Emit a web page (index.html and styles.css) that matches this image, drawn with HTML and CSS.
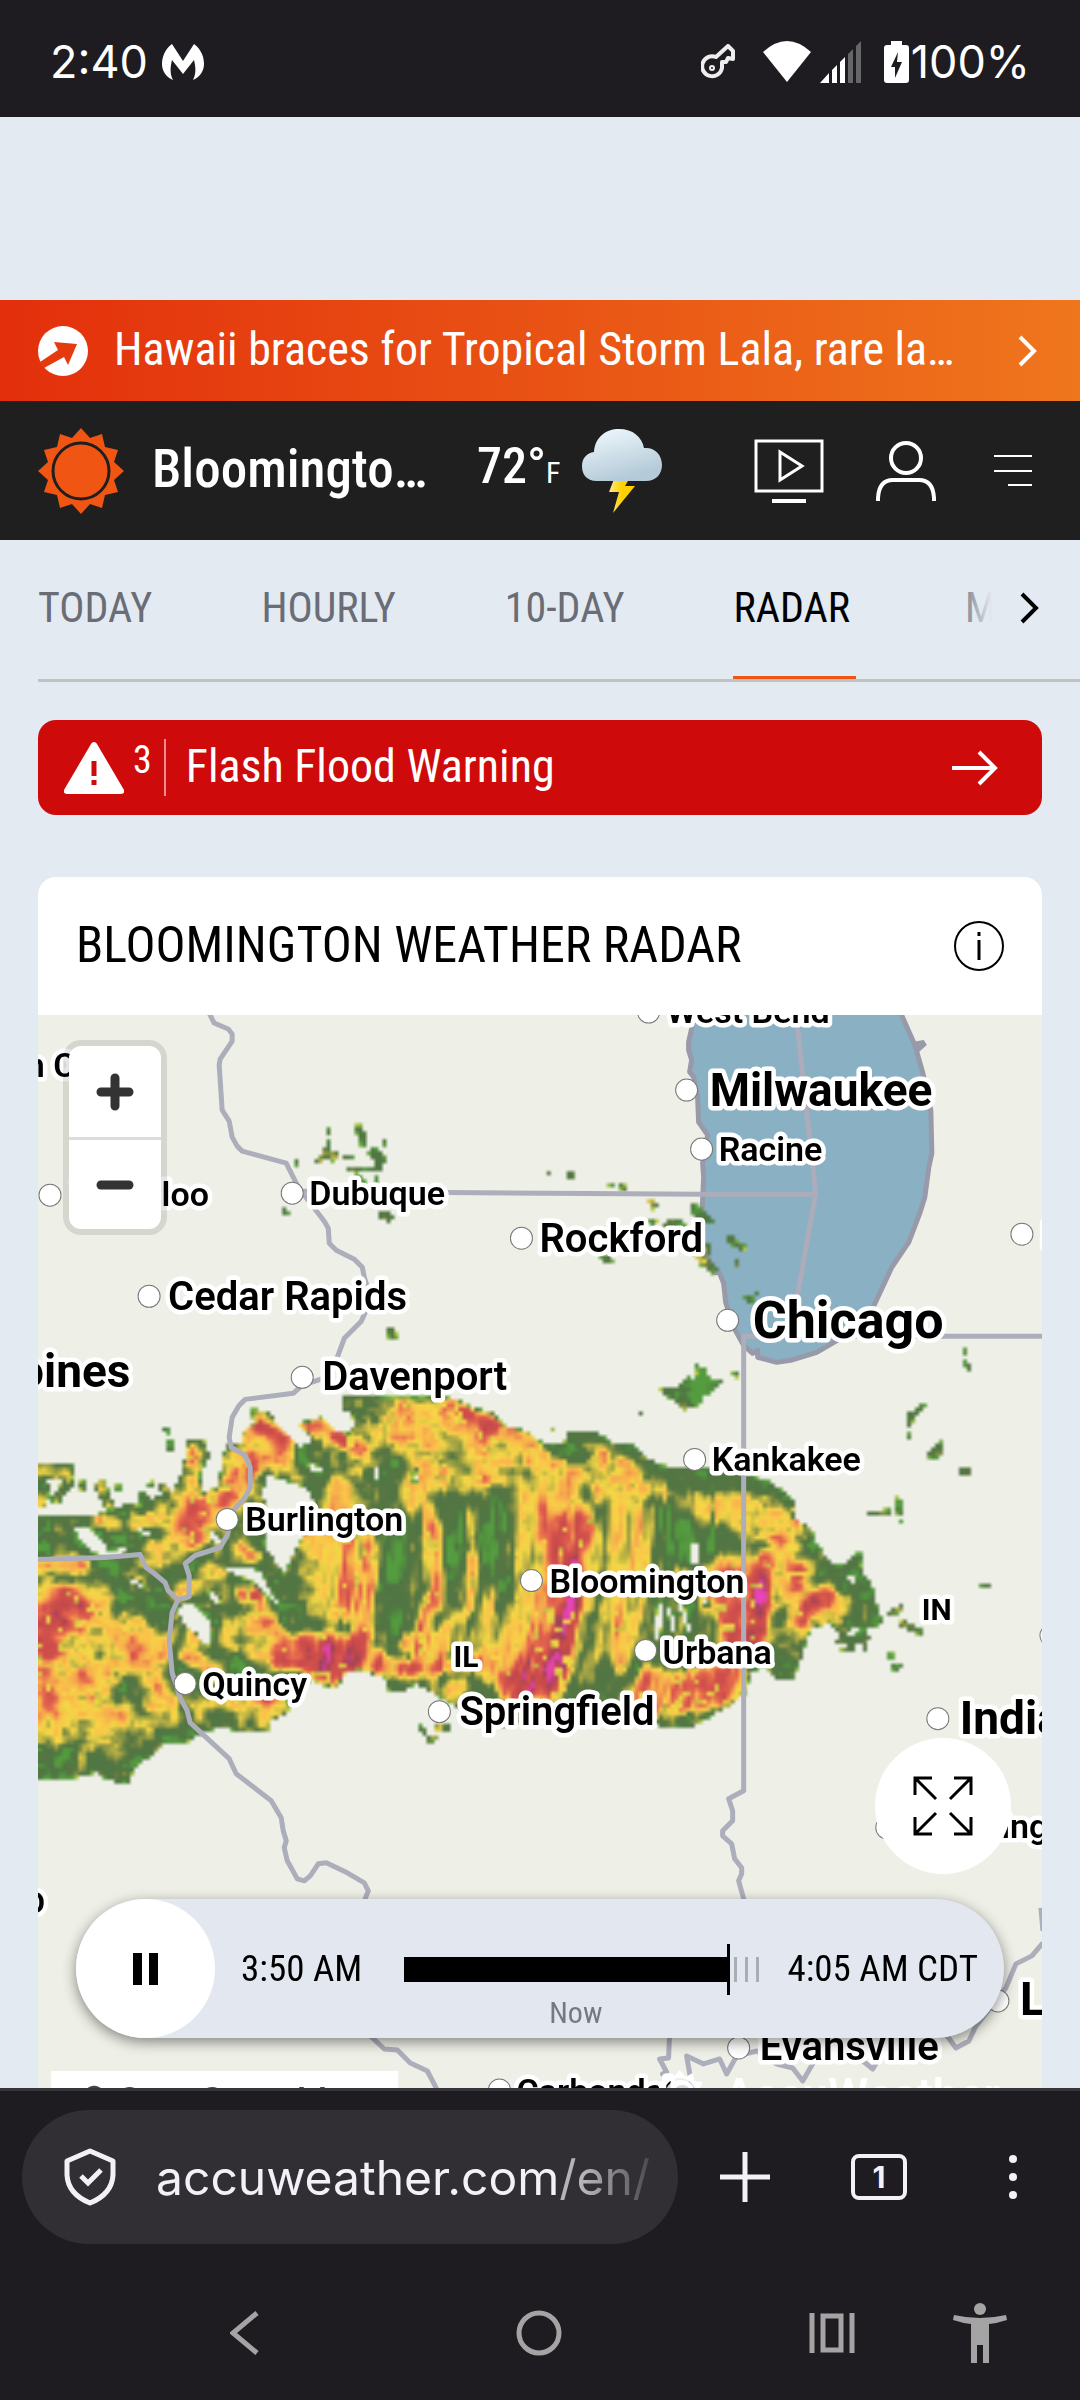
FILE: index.html
```html
<!DOCTYPE html>
<html lang="en">
<head>
<meta charset="utf-8">
<meta name="viewport" content="width=device-width, initial-scale=1">
<title>Bloomington Weather Radar</title>
<link rel="stylesheet" href="styles.css">
</head>
<body>
<header class="status">
  <span class="clock">2:40</span>
  <svg class="m-icon" viewBox="0 0 42 36" width="42" height="36"><path fill="#fff" d="M10 0 21 17 32 0C40 6 42 14 42 20 42 27 38 33 31 36 34 30 34 24 32 16L21 30 10 16C8 24 8 30 11 36 4 33 0 27 0 20 0 13 3 5 10 0Z"/></svg>
  <svg class="key" viewBox="0 0 34 36" width="34" height="36" fill="none" stroke="#eee" stroke-width="4" stroke-linejoin="round"><path d="M15 13 27 2 32 7 32 15 27 14 25 18 21 18 21 24A10 10 0 1 1 15 13Z"/><circle cx="11" cy="24" r="1"/></svg>
  <svg class="wifi" viewBox="0 0 48 41" width="48" height="41"><path fill="#fff" d="M0 11Q24-11 48 11L24 41Z"/></svg>
  <svg class="signal" viewBox="0 0 42 42" width="42" height="42"><path fill="#fff" d="M0 42 9 32V42ZM12 42V29L17 24V42ZM20 42V21L25 16V42Z"/><path fill="#666" d="M28 42V13L33 8V42ZM36 42V5L41 0V42Z"/></svg>
  <svg class="battery" viewBox="0 0 25 42" width="25" height="42"><path fill="#fff" d="M7 0H18V4H22Q25 4 25 7V39Q25 42 22 42H3Q0 42 0 39V7Q0 4 3 4H7Z"/><path fill="#1e1c20" d="M14 11 7 26H11V37L18 21H13Z"/></svg>
  <span class="percent">100%</span>
</header>

<main class="page">
  <div class="ad-space"></div>
  <a class="news" href="#news">
    <svg viewBox="0 0 50 50" width="50" height="50"><circle cx="25" cy="25" r="25" fill="#fff"/><path fill="#e43a0e" d="M16 16 39 18 30 39 26 31 6 42 2 36 20 24Z"/></svg>
    <span class="news-text">Hawaii braces for Tropical Storm Lala, rare la…</span>
    <svg class="chev" viewBox="0 0 20 32" width="20" height="32" fill="none" stroke="#fff" stroke-width="4"><path d="M2 2 16 16 2 30"/></svg>
  </a>

  <div class="top">
    <a href="#home" aria-label="Home"><svg viewBox="-43 -43 86 86" width="86" height="86"><path fill="#f05514" d="M0-43 9-33 21-37 24-24 37-21 33-9 43 0 33 9 37 21 24 24 21 37 9 33 0 43-9 33-21 37-24 24-37 21-33 9-43 0-33-9-37-21-24-24-21-37-9-33Z"/><circle r="28" fill="#f05514" stroke="#1f1f1f" stroke-width="3"/></svg></a>
    <span class="city">Bloomingto…</span>
    <span class="temp">72°<small>F</small></span>
    <svg class="storm" viewBox="0 0 82 84" width="82" height="84"><defs><linearGradient id="cl" x1="0" y1="0" x2="0.4" y2="1"><stop offset="0" stop-color="#f2fbff"/><stop offset="1" stop-color="#b4cad8"/></linearGradient><linearGradient id="bt"><stop offset="0" stop-color="#ffe98a"/><stop offset=".5" stop-color="#ffd000"/></linearGradient></defs><path fill="url(#bt)" d="M33 50H48L44 57H54L32 84 38 63H28Z"/><path fill="url(#cl)" d="M16 52C5 52 1 45 1 37 1 29 6 24 13 23 14 8 25 0 38 0 52 0 61 8 63 19 74 18 81 26 81 36 81 45 75 52 65 52Z"/></svg>
    <button class="icon-btn tv" aria-label="Watch"><svg viewBox="0 0 70 64" width="70" height="64" fill="none" stroke="#fff" stroke-width="3"><path d="M2 2H68V52H2ZM26 13 48 27 26 41Z"/><path stroke-width="4" d="M18 62H52"/></svg></button>
    <button class="icon-btn user" aria-label="Account"><svg viewBox="0 0 60 60" width="60" height="60" fill="none" stroke="#fff" stroke-width="4"><circle cx="30" cy="17" r="15"/><path d="M2 60V57Q3 39 17 39H43Q57 39 58 57V60"/></svg></button>
    <button class="icon-btn menu" aria-label="Menu"><svg viewBox="0 0 38 34" width="38" height="34" fill="none" stroke="#fff" stroke-width="2"><path d="M0 2H38M0 17H38M14 31H38"/></svg></button>
  </div>

  <nav class="tabs">
    <a href="#today">TODAY</a>
    <a href="#hourly">HOURLY</a>
    <a href="#ten">10-DAY</a>
    <a class="on" href="#radar">RADAR</a>
    <a href="#minutecast">MINUTECAST</a>
    <button class="more" aria-label="More tabs"><svg viewBox="0 0 20 32" width="20" height="32" fill="none" stroke="#000" stroke-width="4"><path d="M2 2 16 16 2 30"/></svg></button>
  </nav>

  <a class="alert" href="#alerts">
    <svg viewBox="0 0 60 52" width="60" height="52"><path fill="#fff" d="M30 0Q32 0 33 2L60 48Q61 52 57 52H3Q-1 52 0 48L27 2Q28 0 30 0Z"/><path stroke="#cf0a0a" stroke-width="5" d="M30 19V34M30 38V43"/></svg>
    <span class="count">3</span>
    <span class="alert-text">Flash Flood Warning</span>
    <svg viewBox="0 0 46 36" width="46" height="36" fill="none" stroke="#fff" stroke-width="4"><path d="M0 18H43M27 2 43 18 27 34"/></svg>
  </a>

  <section class="card">
    <div class="card-head">
      <h1>BLOOMINGTON WEATHER RADAR</h1>
      <button class="icon-btn" aria-label="Legend"><svg viewBox="0 0 50 50" width="50" height="50"><circle cx="25" cy="25" r="24" fill="none" stroke="#000" stroke-width="2"/><path stroke="#000" stroke-width="3" d="M25 19V39M25 11V15"/></svg></button>
    </div>
    <div class="map">
      <svg class="layer" viewBox="0 0 1004 1072" preserveAspectRatio="xMinYMin slice">
        <path fill="#8ab0c3" stroke="#989aaa" stroke-width="5" stroke-linejoin="round" d="M657-4 650 27V35L653 45 651 57 655 62 659 82 660 107 669 120 664 148 665 162 663 208 664 228 676 257 681 258 685 268 687 287 695 312 705 330 714 338 719 335 719 342 738 347 752 345 778 337 802 323 833 295 853 252 870 227 881 198 886 182 890 152 893 138 892 95 884 58 876 30 861-4Z"/>
        <path fill="#989aaa" d="M873 27 885 25 888 30 879 38Z"/>
        <path fill="none" stroke="#acacba" stroke-width="5" d="M757-4 777 178 757 290M664 179H777"/>
      </svg>
      <canvas class="layer" id="radar" width="251" height="268"></canvas>
      <svg class="layer" viewBox="0 0 1004 1072" preserveAspectRatio="xMinYMin slice">
        <g fill="none" stroke="#adaebb" stroke-width="5" stroke-linejoin="round">
          <path d="M171-2 176 8 190 14 194 19V26L182 44 181 50 184 95 191 106 194 122 199 131 204 136 248 148 260 172 286 206 290 213 291 228 298 235 316 244 324 252 326 262 330 275V290L323 306 306 323 299 342 288 362 264 370 255 378 207 384 201 390 194 402 191 422 193 432 207 440 212 452V472L207 482 195 495 189 520 182 532 157 540 147 548 151 560V581L140 584 134 597 131 625 134 657 142 682 149 695 152 707 191 743 198 758 233 785 243 802 245 815 248 825 246 832 249 845 259 863 266 865 272 860 280 848 288 847 309 857 326 867 330 875 324 890"/>
          <path d="M0 544 67 542 102 539 108 552 115 557 127 567 130 575 140 584M254 176 502 178 664 179M1004 321H705V775L690 783 694 795V805L684 815V820L693 828 696 843 703 852V858L700 865 707 890"/>
          <path d="M332 1020 346 1033 359 1034 372 1047 389 1055 402 1080M631 1018 630 1042 621 1043 628 1056 624 1058 640 1075M654 1074 648 1040 665 1048 681 1043 688 1058 698 1040 718 1035 738 1048 754 1052 764 1065 775 1046M824 1045 834 1053 840 1043M907 1018 917 1032 930 1025 937 1010 967 972 977 948 993 940 1004 927M1004 915 1002 892"/>
        </g>
        <g fill="#fff" stroke="#777" stroke-width="1">
          <circle cx="610" cy="-3" r="11"/><circle cx="12" cy="180" r="11"/><circle cx="254" cy="178" r="11"/><circle cx="111" cy="281" r="11"/><circle cx="264" cy="362" r="11"/><circle cx="483" cy="223" r="11"/><circle cx="648" cy="75" r="11"/><circle cx="663" cy="134" r="11"/><circle cx="689" cy="305" r="11"/><circle cx="983" cy="219" r="11"/><circle cx="656" cy="444" r="11"/><circle cx="493" cy="565" r="11"/><circle cx="607" cy="635" r="11"/><circle cx="401" cy="696" r="11"/><circle cx="189" cy="504" r="11"/><circle cx="147" cy="668" r="11"/><circle cx="899" cy="703" r="11"/><circle cx="1012" cy="620" r="11"/><circle cx="848" cy="812" r="11"/><circle cx="959" cy="985" r="11"/><circle cx="700" cy="1032" r="11"/><circle cx="461" cy="1074" r="11"/>
        </g>
        <g class="small">
          <text x="-97" y="62">Mason City</text><text x="34" y="191">Waterloo</text><text x="271" y="190">Dubuque</text><text x="628" y="8">West Bend</text><text x="680" y="146">Racine</text><text x="1003" y="232">Kalamazoo</text><text x="673" y="456">Kankakee</text><text x="511" y="577">Bloomington</text><text x="624" y="648">Urbana</text><text x="207" y="516">Burlington</text><text x="164" y="680">Quincy</text><text x="864" y="822">Bloomington</text><text x="478" y="1087">Carbondale</text>
        </g>
        <g class="medium">
          <text x="130" y="295">Cedar Rapids</text><text x="284" y="375">Davenport</text><text x="501" y="237">Rockford</text><text x="421" y="709">Springfield</text><text x="721" y="1044">Evansville</text>
        </g>
        <g class="state">
          <text x="415" y="651">IL</text><text x="883" y="604">IN</text><text x="-40" y="897">MO</text>
        </g>
        <g class="large">
          <text x="-150" y="372">Des Moines</text><text x="671" y="91">Milwaukee</text><text x="921" y="718">Indianapolis</text><text x="981" y="999">Louisville</text>
        </g>
        <text class="huge" x="714" y="323">Chicago</text>
        <g fill="#fff"><path transform="translate(641 1078)" d="M0-24 6-17 13-21 15-13 23-12 20-5 24 0H16A16 16 0 0 0-16 0H-24L-20-5-23-12-15-13-13-21-6-17Z"/><circle cx="641" cy="1078" r="14" opacity=".85"/></g>
        <text class="mark" x="685" y="1095">AccuWeather</text>
        <path fill="#fff" d="M13 1055H360V1075H13Z"/>
        <text class="osm" x="42" y="1097">© OpenStreetMap</text>
      </svg>
      <div class="zoom">
        <button aria-label="Zoom in"><svg viewBox="0 0 38 38" width="38" height="38" stroke="#333" stroke-width="9" stroke-linecap="round"><path d="M5 19H33M19 5V33"/></svg></button>
        <button aria-label="Zoom out"><svg viewBox="0 0 38 38" width="38" height="38" stroke="#333" stroke-width="9" stroke-linecap="round"><path d="M5 19H33"/></svg></button>
      </div>
      <button class="full" aria-label="Full screen"><svg viewBox="0 0 60 60" width="60" height="60" fill="none" stroke="#000" stroke-width="3"><path d="M2 19V2H19M2 2 23 23M41 2H58V19M58 2 37 23M2 41V58H19M2 58 23 37M41 58H58V41M58 58 37 37"/></svg></button>
      <div class="timeline">
        <button class="pause" aria-label="Pause"><svg viewBox="0 0 26 32" width="26" height="32"><path d="M0 0H9V32H0ZM16 0H25V32H16Z"/></svg></button>
        <span class="from">3:50 AM</span>
        <label class="track"><input type="range" min="0" max="100" value="90"><span>Now</span></label>
        <span class="to">4:05 AM CDT</span>
      </div>
    </div>
  </section>
</main>

<div class="browser">
  <a class="url" href="#url">
    <svg viewBox="0 0 52 58" width="52" height="58" fill="none" stroke="#f4f0f8" stroke-width="5"><path stroke-linejoin="round" d="M26 3 49 13V27Q48 46 26 55 4 46 3 27V13Z"/><path d="M17 28 24 35 37 22"/></svg>
    <span class="address">accuweather.com<i>/en/</i></span>
  </a>
  <button class="icon-btn plus" aria-label="New tab"><svg viewBox="0 0 50 50" width="50" height="50" stroke="#f4f0f8" stroke-width="5"><path d="M0 25H50M25 0V50"/></svg></button>
  <button class="tabcount" aria-label="Tabs">1</button>
  <button class="icon-btn dots" aria-label="More"><svg viewBox="0 0 10 46" width="10" height="46" fill="#f4f0f8"><circle cx="5" cy="5" r="4"/><circle cx="5" cy="23" r="4"/><circle cx="5" cy="41" r="4"/></svg></button>
</div>
<nav class="system">
  <button class="icon-btn back" aria-label="Back"><svg viewBox="0 0 30 44" width="30" height="44" fill="none" stroke="#a4a4a4" stroke-width="5"><path d="M27 2 3 22 27 42"/></svg></button>
  <button class="icon-btn home" aria-label="Home"><svg viewBox="0 0 46 46" width="46" height="46" fill="none" stroke="#a4a4a4" stroke-width="5"><circle cx="23" cy="23" r="20"/></svg></button>
  <button class="icon-btn recents" aria-label="Recent apps"><svg viewBox="0 0 46 40" width="46" height="40" fill="none" stroke="#a4a4a4" stroke-width="5"><path d="M3 0V40M43 0V40M14 3H32V37H14Z"/></svg></button>
  <button class="icon-btn access" aria-label="Accessibility"><svg viewBox="0 0 54 60" width="54" height="60" fill="#a4a4a4"><circle cx="27" cy="6" r="6"/><path d="M1 12Q27 18 53 12L54 17Q45 20 36 21V60H30V42H24V60H18V21Q9 20 0 17Z"/></svg></button>
</nav>
<script src="radar.js"></script>
</body>
</html>
```
FILE: styles.css
```css
* { box-sizing: border-box; }
body {
  margin: 0;
  height: 100vh;
  display: flex;
  flex-direction: column;
  background: #1e1c20;
  font-family: "Roboto Condensed", Roboto, sans-serif;
}
a { color: inherit; text-decoration: none; }
button { margin: 0; padding: 0; border: 0; font: inherit; }
svg { display: block; flex: none; }
.icon-btn { background: none; color: inherit; }

.status {
  flex: none;
  height: 117px;
  padding: 6px 50px 0 50px;
  display: flex;
  align-items: center;
  color: #fff;
  font-family: Inter, sans-serif;
  font-size: 45px;
}
.m-icon { margin-left: 14px; }
.key { margin-left: auto; }
.wifi { margin-left: 28px; }
.signal { margin-left: 9px; }
.battery { margin-left: 22px; }
.percent { margin-left: 2px; }

.page {
  flex: 1;
  min-height: 0;
  display: flex;
  flex-direction: column;
  overflow: hidden;
  background: #e3eaf2;
}
.ad-space { flex: none; height: 183px; }

.news {
  flex: none;
  height: 101px;
  padding: 0 42px 0 38px;
  display: flex;
  align-items: center;
  background: linear-gradient(90deg, #e32f0c, #ef761d);
  color: #fff;
  font-size: 46px;
  line-height: 98px;
}
.news-text {
  flex: 1;
  min-width: 0;
  height: 101px;
  margin-left: 26px;
  overflow: hidden;
  white-space: nowrap;
}

.top {
  flex: none;
  height: 139px;
  padding: 0 48px 0 38px;
  display: flex;
  align-items: center;
  background: #1f1f1f;
  color: #fff;
  font-size: 50px;
  font-weight: 500;
}
.city { margin-left: 28px; font-size: 53px; line-height: 54px; padding-bottom: 4px; }
.temp { margin-left: 50px; line-height: 54px; padding-bottom: 2px; }
.temp small { font-size: 30px; font-weight: 400; }
.storm { margin-left: 20px; }
.tv { margin-left: auto; }
.user { margin-left: 52px; }
.menu { margin-left: 58px; }

.tabs {
  position: relative;
  flex: none;
  height: 142px;
  margin-left: 38px;
  display: flex;
  gap: 109px;
  border-bottom: 3px solid #c2c2c2;
  color: #6a6d76;
  font-size: 42px;
  line-height: 136px;
  white-space: nowrap;
  overflow: hidden;
}
.tabs .on { padding-right: 6px; color: #000; border-bottom: 3px solid #f05514; }
.more {
  position: absolute;
  top: 0;
  right: 0;
  height: 136px;
  width: 122px;
  padding-left: 62px;
  background: linear-gradient(90deg, #e3eaf200, #e3eaf2 34px);
}

.alert {
  flex: none;
  height: 95px;
  margin: 38px 38px 62px;
  padding: 0 44px 0 26px;
  display: flex;
  align-items: center;
  border-radius: 18px;
  background: #cf0a0a;
  color: #fff;
  font-size: 46px;
}
.count {
  height: 57px;
  margin-left: 9px;
  padding-right: 12px;
  border-right: 2px solid #e89090;
  font-size: 38px;
  line-height: 42px;
}
.alert-text { flex: 1; margin-left: 20px; padding-bottom: 3px; }

.card {
  flex: 1;
  min-height: 0;
  margin: 0 38px;
  display: flex;
  flex-direction: column;
  border-radius: 18px 18px 0 0;
  background: #fff;
  overflow: hidden;
}
.card-head {
  flex: none;
  height: 138px;
  padding: 0 38px;
  display: flex;
  align-items: center;
  justify-content: space-between;
}
h1 { margin: 0; padding-bottom: 3px; font-size: 50px; font-weight: 400; line-height: 60px; }

.map { position: relative; flex: 1; background: #eeefe6; overflow: hidden; }
.layer { position: absolute; inset: 0; width: 100%; height: 100%; object-fit: cover; object-position: left top; }
.map text {
  font-family: Roboto, sans-serif;
  font-weight: 600;
  fill: #000;
  stroke: #fff;
  stroke-width: 9px;
  stroke-linejoin: round;
  paint-order: stroke;
}
.small { font-size: 34px; }
.medium { font-size: 40px; }
.map .state text { font-size: 30px; font-weight: 700; }
.map .large text { font-size: 46px; font-weight: 700; }
.map .huge { font-size: 52px; font-weight: 700; }
.map .mark { font-size: 46px; fill: #fff; stroke: none; }
.map .osm { font-size: 36px; font-weight: 400; fill: #444; stroke: none; }

.zoom {
  position: absolute;
  left: 25px;
  top: 25px;
  width: 104px;
  border: 6px solid #0000001a;
  border-radius: 18px;
  background: #fff;
  background-clip: padding-box;
}
.zoom button { display: grid; place-items: center; width: 100%; height: 89px; background: none; }
.zoom button:first-child { height: 94px; border-bottom: 3px solid #dcdcdc; }
.full {
  position: absolute;
  right: 31px;
  bottom: 214px;
  width: 136px;
  height: 136px;
  display: grid;
  place-items: center;
  border-radius: 50%;
  background: #fff;
}
.timeline {
  position: absolute;
  left: 38px;
  right: 38px;
  bottom: 50px;
  height: 139px;
  padding-right: 26px;
  display: flex;
  align-items: center;
  border-radius: 70px;
  background: #e3e8f0;
  box-shadow: 0 4px 14px #00000073;
  font-size: 37px;
  white-space: nowrap;
}
.pause { display: grid; place-items: center; width: 139px; height: 139px; border-radius: 50%; background: #fff; }
.from { margin-left: 26px; }
.track { flex: 1; margin: 36px 22px 0 42px; color: #767981; font-size: 30px; line-height: 35px; text-align: center; }
.track span { display: block; padding-right: 18px; }
.track input {
  display: block;
  width: 100%;
  height: 51px;
  margin: 0;
  appearance: none;
  background: none;
}
.track input::-webkit-slider-runnable-track {
  height: 25px;
  background: linear-gradient(90deg, #000 90%, #0000 90%), repeating-linear-gradient(90deg, #aaadb3 0 3px, #0000 3px 11px);
}
.track input::-webkit-slider-thumb {
  appearance: none;
  width: 3px;
  height: 51px;
  margin-top: -13px;
  background: #000;
}

.browser {
  flex: none;
  height: 178px;
  padding: 19px 62px 22px 22px;
  display: flex;
  align-items: center;
  border-top: 3px solid #36353b;
  color: #f4f0f8;
}
.url {
  flex: 1;
  min-width: 0;
  height: 134px;
  padding: 0 24px 0 42px;
  display: flex;
  align-items: center;
  gap: 40px;
  border-radius: 67px;
  background: #312f34;
  font-family: Inter, sans-serif;
  font-size: 48px;
}
.address {
  overflow: hidden;
  white-space: nowrap;
  mask-image: linear-gradient(90deg, #000 430px, #0000 510px);
}
.address i { font-style: normal; color: #b5b3b8; }
.plus { margin-left: 42px; }
.tabcount {
  width: 56px;
  height: 46px;
  margin-left: 81px;
  border: 4px solid #f4f0f8;
  border-radius: 8px;
  background: none;
  color: inherit;
  font-family: Inter, sans-serif;
  font-size: 30px;
  font-weight: 700;
  line-height: 38px;
}
.dots { margin-left: 101px; }

.system {
  flex: none;
  height: 134px;
  display: grid;
  grid-template-columns: 98fr 294fr 294fr 72fr 148fr 148fr 26fr;
  place-items: center;
}
.back { grid-column: 2; }
.home { grid-column: 3; }
.recents { grid-column: 5; }
.access { grid-column: 6; }
```
FILE: radar.js
```js
// Paints the precipitation layer: echo shapes are drawn as levels on a coarse
// grid, roughened with noise, then coloured with the radar palette.
const W = 251, H = 268, CELL = 4;
const mask = [
  [0,502,40,500,58,500,90,488,100,491,120,480,136,474,145,452,148,425,165,423,172,440,162,458,164,478,180,472,184,440,190,428,203,427,205,415,215,408,213,393,232,398,240,410,262,432,275,425,258,408,283,402,297,415,310,418,317,408,312,398,303,392,302,380,360,382,415,382,435,393,452,395,465,410,492,417,505,428,525,430,529,416,562,418,572,428,595,428,605,438,619,450,640,452,659,450,705,458,732,467,744,475,757,488,754,502,772,512,775,525,792,548,805,548,822,535,822,555,832,565,837,588,844,608,829,612,825,625,805,628,792,608,772,612,755,663,735,662,729,652,712,655,707,678,685,693,652,712,625,712,600,702,545,700,472,710,455,712,417,690,377,668,367,675,350,675,347,662,320,655,307,658,297,675,277,665,250,668,250,697,233,705,230,715,213,718,187,712,167,715,147,728,127,728,110,742,93,757,93,767,77,767,57,757,37,762,0,762],
  [619,375,638,371,650,360,655,366,660,356,655,348,667,352,673,366,684,362,680,372,665,382,660,390,645,394,632,383],
  [275,148,282,140,290,122,292,134,302,140,294,146,286,143,280,150],
  [890,435,903,424,903,442,888,442]
];
const holes = [
  [230,458,247,465,267,472,277,488,262,528,252,542,247,560,236,545,226,530,230,495,224,478],
  [185,552,207,552,222,555,232,575,243,592,230,582,215,566,200,560],
  [137,592,155,587,170,602,174,620,170,632,158,617,145,607],
  [36,513,50,510,62,522,70,535,88,532,84,540,60,540,44,528]
];
const holeLines = [
  [5,174,520,182,528],[4,100,515,112,518],[5,95,565,104,570],[5,172,578,180,585],[6,272,450,280,455],[5,338,455,338,463],
  [7,622,590,618,622],[5,630,592,634,612],[5,640,582,650,615],[8,655,530,657,545],[4,666,585,668,590],[6,812,562,814,564],[4,376,455,376,468],[5,810,618,822,612],[6,30,478,34,482]
];
const maskLines = [
  [14,3,455,30,455],[14,4,470,2,485],[9,30,468,18,484],[6,44,468,46,474],[11,62,470,70,488],[6,80,472,82,474],[8,104,482,110,486],[5,112,468,114,470],[6,124,472,130,476],[8,127,488,120,500],[8,90,500,130,500],
  [6,132,428,132,434],[4,126,415,130,415],
  [7,320,113,325,128],[10,335,138,342,146],[6,312,154,340,153],[6,318,162,324,168],[8,345,200,350,202],[4,290,116,291,117],[4,258,146,259,148],[4,246,195,248,198],[4,306,141,312,141],[4,345,126,346,127],[4,337,163,338,164],
  [8,352,317,354,320],[4,509,157,512,159],[6,531,158,533,162],[4,572,170,573,170],[5,582,170,585,173],[5,611,185,616,192],[4,611,207,616,207],[9,630,210,642,209],[8,655,193,664,202],[6,668,204,673,206],
  [8,658,237,665,246],[7,667,248,675,254],[5,668,231,671,238],[8,566,243,570,244],[7,692,222,694,226],[5,700,230,704,232],[4,698,246,698,250],[7,710,283,713,286],[4,717,277,718,277],[4,695,359,699,359],
  [5,925,336,925,337],[6,926,348,931,352],[5,872,402,884,388],[5,871,400,871,408],[5,871,420,871,421],[8,924,455,928,455],[6,832,498,848,497],[6,860,488,861,496],[4,856,484,857,484],[4,862,505,862,505],
  [6,852,597,862,593],[5,862,607,882,616],[5,850,642,852,640],[7,856,651,859,651],[5,944,569,948,570],[3,893,571,894,572],[6,800,625,830,622],[6,805,634,812,632],[5,824,622,826,632],
  [7,400,712,408,712],[6,390,724,396,722],[5,383,712,386,716],[3,600,397,602,397],[3,511,412,512,413]
];
// [level, width (0 = filled polygon), points...]
const echoes = [
  [.56,0,0,545,50,548,62,565,78,590,98,600,122,595,128,640,140,690,152,700,172,690,165,705,130,715,105,722,92,742,75,748,55,728,0,730],
  [.6,0,0,560,45,565,70,610,110,615,125,660,130,700,80,700,60,680,0,700],
  [.42,0,75,560,105,560,128,580,125,598,95,600],
  [.26,14,60,552,80,552],[.34,18,82,680,90,665],[.38,14,95,700,110,690],
  [.76,10,0,552,50,550],[.87,0,20,577,40,570,55,595,48,612,30,618,24,640,10,648,-5,650,-5,600],
  [.76,16,8,650,15,700],[.68,20,40,630,60,690],[.72,9,75,615,95,640],[.97,7,26,577,27,578],[.96,8,20,600,15,632],[.76,10,112,662,118,670],[.72,8,105,684,125,700],[.76,8,125,640,130,620],[.72,8,30,660,38,680],
  [.56,20,105,545,140,535],[.6,0,110,545,105,530,135,505,140,490,150,480,175,478,190,460,190,440,205,415,222,410,250,435,264,458,240,450,220,445,215,475,195,505,175,520,150,540],
  [.84,0,140,490,165,485,174,495,165,512,158,530,150,522,140,508],[.84,16,184,485,200,462,217,446],[.88,8,200,460,204,466],
  [.86,18,222,412,242,425],[.62,10,245,430,258,455],[.82,12,157,433,155,450],[.6,8,154,460,153,475],
  [.85,16,270,409,283,411],[.84,11,292,418,324,433],[.6,8,265,408,290,422],
  [.66,10,60,505,85,510],[.74,10,95,508,125,505],[.82,9,118,508,126,500],[.8,11,170,552,178,560],[.68,14,140,575,160,572],[.8,10,204,533,218,545],
  [.62,0,190,602,215,590,240,615,258,635,245,655,180,632],[.86,16,203,580,220,580],[.76,8,222,590,255,635],[.6,16,160,620,148,640],[.82,12,148,640,175,655],
  [.58,16,155,690,215,680],[.85,12,215,685,240,684],[.8,7,226,695,228,712],
  [.66,0,230,650,262,615,300,615,375,650,375,662,310,655],[.87,0,235,642,265,618,300,624,330,630,352,648,345,657,310,652,297,674,275,662,240,650],[1.04,14,293,642,295,652],[.96,12,290,630,282,650],
  [.6,36,300,480,300,590],[.58,26,272,510,283,590],[.7,13,312,520,314,590],[.86,8,333,520,330,580,325,625],[.5,12,340,580,345,620],
  [.86,14,326,615,320,638],[.6,0,325,418,345,400,362,386,410,384,500,432,560,430,590,440,600,460,650,480,740,478,765,505,755,525,690,505,650,485,600,480,560,480,540,500,480,470,385,480,370,450,350,430],
  [.36,18,548,440,510,430],[.64,28,375,470,395,560],[.7,14,396,510,398,590],[.66,14,390,400,440,425,520,455],
  [.84,12,390,580,380,620,367,630],[.6,16,420,600,400,640],[.84,12,365,388,368,390],[.87,14,407,388,430,402,470,415],[.78,10,470,415,500,428],[1,5,412,384,440,402],
  [.27,22,355,510,356,608],[.36,12,375,500,380,580],[.3,14,415,500,414,575],[.64,9,435,495,435,550],[.8,11,435,545,430,590,418,615],[.57,12,450,590,440,640],
  [.33,14,455,490,458,560],[.64,18,483,480,486,560,470,640],[.55,30,462,590,445,650],[.8,12,350,652,400,652,445,644],[.62,30,385,630,420,620],[.64,12,400,675,425,668],
  [.64,76,530,500,520,600,490,655],[.36,12,545,470,556,500],
  [.85,0,512,510,522,498,546,496,551,528,543,540,540,600,532,650,525,670,505,685,468,680,462,660,488,640,503,600,514,560],
  [1.07,12,533,545,530,590,524,614],[.95,18,520,640,505,665],[1.02,7,480,680,505,670],
  [.36,9,550,600,543,660,530,690],[.6,34,583,480,592,560,590,640],[.54,12,562,570,560,640],[.66,12,578,590,580,650],[.42,36,560,680,590,690],[.28,12,602,640,598,670],
  [.32,18,630,500,650,560,650,590],[.33,20,665,530,690,540],[.6,24,650,490,720,505,752,530],[.6,14,690,560,640,560],[.56,7,665,570,665,640],
  [.65,62,690,570,725,600],[.8,24,690,560,695,625],[.9,10,698,590,697,665],
  [.87,22,727,546,722,580,714,625],[1.09,9,725,560,722,590,720,614],
  [.36,18,742,580,748,640],[.5,12,750,630,753,632],[.64,32,745,550,770,600,790,590],[.82,12,745,568,764,552],[.84,14,763,600,774,584,792,578],[.8,9,764,608,762,620],[.8,6,748,507,749,508],[.82,7,764,514,768,520],[.56,14,812,584,828,598],
  [.65,46,612,680,690,670],[.86,12,613,656,598,684],[.87,17,692,655,674,694],[.8,10,630,672,664,665],[1.02,6,680,670,676,684],[.74,8,640,690,670,688],
  [.35,16,630,710,685,700],
  [.78,9,3,460,12,455],[.8,8,28,458,30,460],[.7,8,0,485,10,485],[.82,8,62,472,64,478],[.65,6,70,484,72,490],[.74,6,124,474,126,474],[.8,7,122,492,124,500],[.66,5,403,710,405,714],
  [.28,7,320,113,325,128],[.34,6,294,142,290,138],[.35,8,340,140,335,150],[.26,30,640,372,665,372]
];

function grid(draw, blur) {
  const c = document.createElement('canvas');
  c.width = W; c.height = H;
  const g = c.getContext('2d');
  g.filter = 'blur(' + blur + 'px)';
  g.scale(1 / CELL, 1 / CELL);
  g.lineJoin = g.lineCap = 'round';
  draw(g);
  return g.getImageData(0, 0, W, H).data;
}
function trace(g, pts) {
  g.beginPath();
  for (let i = 0; i < pts.length; i += 2) g.lineTo(pts[i], pts[i + 1]);
}
const shape = grid(g => {
  g.fillStyle = g.strokeStyle = '#fff';
  mask.forEach(p => { trace(g, p); g.fill(); });
  g.globalCompositeOperation = 'destination-out';
  holes.forEach(p => { trace(g, p); g.fill(); });
  holeLines.forEach(([w, ...p]) => { trace(g, p); g.lineWidth = w; g.stroke(); });
  g.globalCompositeOperation = 'source-over';
  maskLines.forEach(([w, ...p]) => { trace(g, p); g.lineWidth = w + 1; g.stroke(); });
}, 0.4);
const level = grid(g => {
  const tone = l => 'rgb(' + [l, l, l].map(v => Math.round(v * 220)).join() + ')';
  g.fillStyle = tone(.37);
  g.fillRect(-50, -50, 1200, 1200);
  echoes.forEach(([l, w, ...p]) => {
    g.fillStyle = g.strokeStyle = tone(l);
    g.lineWidth = w;
    trace(g, p);
    w ? g.stroke() : g.fill();
  });
}, 0.9);

const hash = (x, y) => { const s = Math.sin(x * 127.1 + y * 311.7) * 43758.5453; return s - Math.floor(s); };
function noise(x, y) {
  const i = Math.floor(x), j = Math.floor(y), u = x - i, v = y - j;
  const a = u * u * (3 - 2 * u), b = v * v * (3 - 2 * v);
  return (hash(i, j) * (1 - a) + hash(i + 1, j) * a) * (1 - b) + (hash(i, j + 1) * (1 - a) + hash(i + 1, j + 1) * a) * b - .5;
}
const palette = [[.12, 182, 200, 66], [.2, 92, 164, 66], [.26, 82, 150, 62], [.31, 80, 118, 68], [.42, 86, 118, 66], [.5, 172, 168, 68], [.56, 244, 216, 70], [.62, 250, 196, 74], [.69, 246, 170, 76], [.76, 230, 104, 78], [.83, 210, 80, 76], [.92, 198, 74, 74], [.97, 158, 66, 92], [1.01, 226, 66, 160], [1.12, 230, 70, 190]];
function colour(v) {
  if (v <= palette[0][0]) return palette[0].slice(1);
  for (let i = 1; i < palette.length; i++) {
    const p = palette[i - 1], q = palette[i];
    if (v <= q[0]) { const t = (v - p[0]) / (q[0] - p[0]); return [1, 2, 3].map(k => p[k] + (q[k] - p[k]) * t); }
  }
  return palette[palette.length - 1].slice(1);
}
const ctx = document.getElementById('radar').getContext('2d');
const out = ctx.createImageData(W, H);
for (let y = 0; y < H; y++) for (let x = 0; x < W; x++) {
  const i = (y * W + x) * 4, px = x * CELL, py = y * CELL;
  const m = shape[i + 3] / 255 + noise(x / 1.8, y / 1.8) * .35;
  if (m < .38) continue;
  const streaky = Math.max(0, Math.min(1, (px - 260) / 40, (730 - px) / 60, (py - 455) / 40));
  const bend = x + Math.pow((y - 120) / 16, 2) * .8;
  const rough = noise(x / 2.1, y / 2.1) * .24 + noise(x / 5 + 40, y / 5) * .22 + noise(x * .9, y * .9 + 9) * .09;
  const comb = noise(bend / 1.2, y / 9) * .26 + noise(bend / 3, y / 16 + 7) * .18 + noise(x / 1.5, y / 2.5) * .12;
  let v = level[i] / 220 + rough * (1 - streaky) + comb * streaky;
  v = Math.max(.24, v);
  v = Math.min(v, .1 + Math.max(0, m - .38) * .9 + (m > .9 ? 1 : 0));
  const c = colour(v);
  out.data[i] = c[0]; out.data[i + 1] = c[1]; out.data[i + 2] = c[2]; out.data[i + 3] = 255;
}
ctx.putImageData(out, 0, 0);
```
